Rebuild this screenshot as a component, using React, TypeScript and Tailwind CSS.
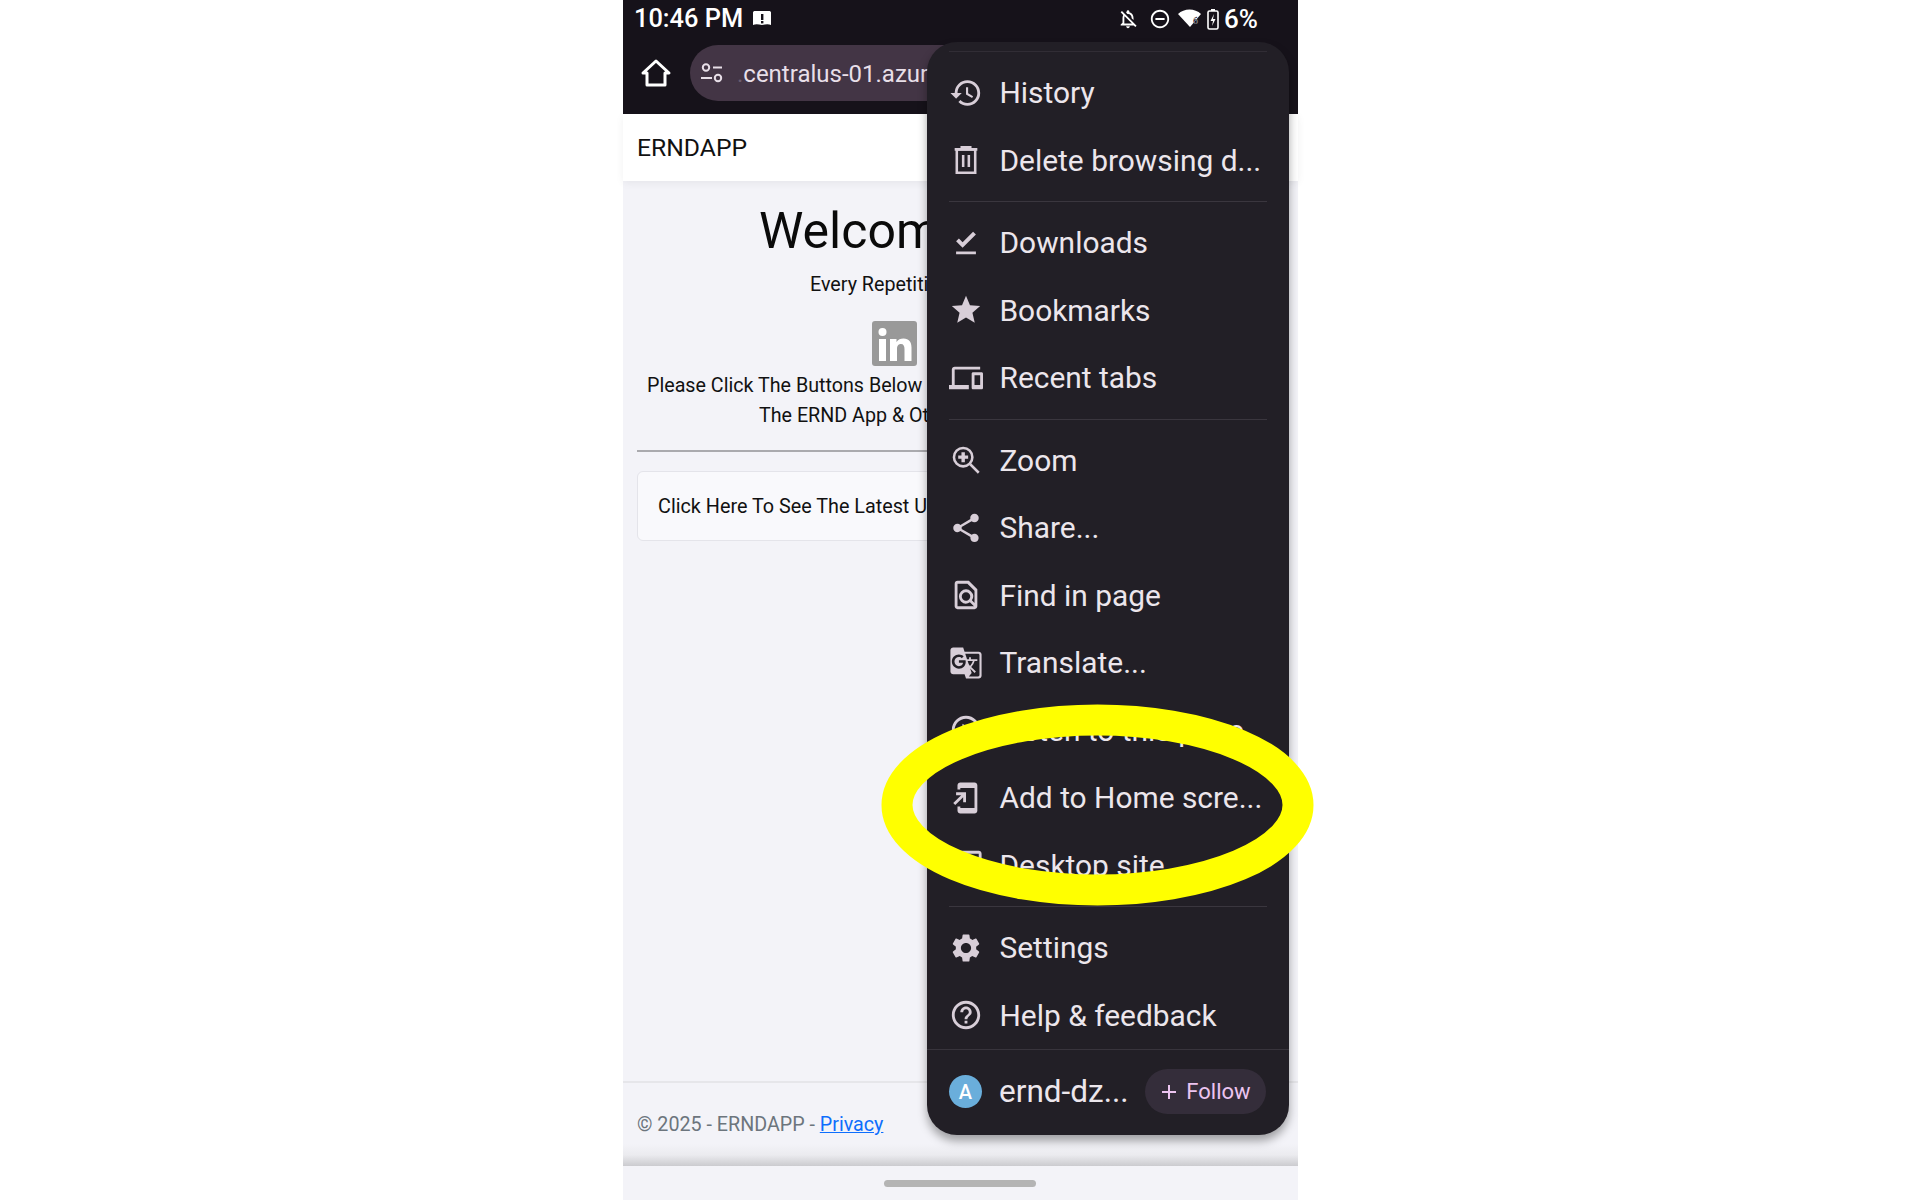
import type { ReactNode } from "react";
import {
  MdHistory,
  MdFileDownloadDone,
  MdStar,
  MdOutlineDevices,
  MdShare,
  MdOutlineFindInPage,
  MdGTranslate,
  MdOutlinePlayCircle,
  MdOutlineAddToHomeScreen,
  MdOutlineDesktopWindows,
  MdSettings,
  MdHelpOutline,
  MdOutlineNotificationsOff,
  MdOutlineDoNotDisturbOn,
  MdAdd,
} from "react-icons/md";

type Item = { icon: ReactNode; label: string };

const ic = "text-[#d8ced8] w-[34px] h-[34px]";

const TrashIcon = () => (
  <svg className={ic} viewBox="0 0 24 24" fill="none" stroke="currentColor" strokeWidth="1.8">
    <path d="M4 4.500h16M9 4.500V3h6v1.500" />
    <path d="M5.500 4.500h13V21h-13z" />
    <path d="M10 8.500v8.500M14 8.500v8.500" />
  </svg>
);

const ZoomIcon = () => (
  <svg className={ic} viewBox="0 0 24 24" fill="none" stroke="currentColor" strokeWidth="1.8">
    <circle cx="10" cy="10" r="6.500" />
    <path d="M15 15l6 6" />
    <path d="M10 6.500v7M6.500 10h7" strokeWidth="2.400" />
  </svg>
);

const groups: Item[][] = [
  [
    { icon: <MdHistory className={ic} />, label: "History" },
    { icon: <TrashIcon />, label: "Delete browsing d..." },
  ],
  [
    { icon: <MdFileDownloadDone className={ic} />, label: "Downloads" },
    { icon: <MdStar className={ic} />, label: "Bookmarks" },
    { icon: <MdOutlineDevices className={ic} />, label: "Recent tabs" },
  ],
  [
    { icon: <ZoomIcon />, label: "Zoom" },
    { icon: <MdShare className={ic} />, label: "Share..." },
    { icon: <MdOutlineFindInPage className={ic} />, label: "Find in page" },
    { icon: <MdGTranslate className={ic} />, label: "Translate..." },
    { icon: <MdOutlinePlayCircle className={ic} />, label: "Listen to this page" },
    { icon: <MdOutlineAddToHomeScreen className={ic} />, label: "Add to Home scre..." },
    { icon: <MdOutlineDesktopWindows className={ic} />, label: "Desktop site" },
  ],
  [
    { icon: <MdSettings className={ic} />, label: "Settings" },
    { icon: <MdHelpOutline className={ic} />, label: "Help & feedback" },
  ],
];

const Row = ({ icon, label }: Item) => (
  <div className="flex h-[67.5px] items-center">
    <div className="flex w-[72.500px] shrink-0 pl-[22px]">{icon}</div>
    <span className="whitespace-nowrap pt-[1px] text-[29.900px] leading-none text-[#ece6ec]">{label}</span>
  </div>
);

const Menu = () => (
  <div className="absolute left-[304px] top-[42px] h-[1093px] w-[362px] rounded-[30px] bg-[#221f26] shadow-[0_6px_10px_rgba(0,0,0,0.35)]">
    <div className="mx-[22px] mt-[9px] mb-[7px] h-[1px] bg-[#312d35]" />
    {groups.map((group, i) => (
      <div key={i}>
        {i > 0 && <div className="mx-[22px] my-[7px] h-[1px] bg-[#3a363e]" />}
        {group.map((item) => (
          <Row key={item.label} {...item} />
        ))}
      </div>
    ))}
    <div className="flex h-[84px] items-center border-t border-[#38343c] pl-[22px] pr-[23px]">
      <div className="flex h-[33px] w-[33px] items-center justify-center rounded-full bg-[#6aaedb] text-[20px] font-medium text-white">
        A
      </div>
      <span className="ml-[17px] text-[31.500px] leading-none text-[#ece6ec]">ernd-dz...</span>
      <div className="ml-auto flex h-[45px] w-[121px] items-center justify-center gap-[5px] rounded-full bg-[#342d3a] pr-[3px] text-[22px] text-[#ecc4f0]">
        <MdAdd className="h-[24px] w-[24px]" />
        Follow
      </div>
    </div>
  </div>
);

// the hand drawn yellow ring from the screenshot
const Highlight = () => (
  <svg className="absolute left-[258px] top-[704px]" width="434" height="202" viewBox="0 0 434 202">
    <ellipse cx="216.5" cy="101" rx="200.5" ry="85" fill="none" stroke="#ffff00" strokeWidth="31" />
  </svg>
);

const StatusBar = () => (
  <div className="flex h-[36px] items-center pl-[11px] pt-[2px] text-white">
    <span className="text-[25.400px] font-medium leading-none">10:46 PM</span>
    <svg className="ml-[9px]" width="20" height="18" viewBox="0 0 20 18">
      <path d="M1 2.500c0-1 1-1.500 2-1.500h14c1 0 2 .5 2 1.500V15c-2-1-5-1-9 0-4-1-7-1-9 0z" fill="#fff" />
      <rect x="9" y="4" width="2.400" height="6" fill="#16121a" />
      <rect x="9" y="11" width="2.400" height="2.400" fill="#16121a" />
    </svg>
    <div className="ml-auto flex items-center pr-[40px]">
      <MdOutlineNotificationsOff className="h-[22px] w-[22px]" />
      <MdOutlineDoNotDisturbOn className="ml-[10px] h-[22px] w-[22px]" />
      <svg className="ml-[7px]" width="24" height="20" viewBox="0 0 24 20">
        <path d="M0 5C6-1 17-1 23 5l-11 13z" fill="#fff" />
        <text x="15" y="15" fontSize="9" fill="#fff" fontFamily="Roboto" stroke="#16121a" strokeWidth="0.4">6</text>
      </svg>
      <svg className="ml-[5px]" width="12" height="22" viewBox="0 0 12 22">
        <rect x="1" y="3" width="10" height="18" rx="1.500" fill="none" stroke="#fff" strokeWidth="1.600" />
        <rect x="4" y="1" width="4" height="2" fill="#fff" />
        <path d="M7 6 3.500 13H6l-1 5 3.500-7H6z" fill="#fff" />
      </svg>
      <span className="ml-[5px] text-[26px] font-medium leading-none">6%</span>
    </div>
  </div>
);

const HomeIcon = () => (
  <svg width="34" height="34" viewBox="0 0 34 34" fill="none" stroke="#fff" strokeWidth="3" strokeLinejoin="round">
    <path d="M4 17 17 5l13 12h-4v12H8V17z" />
  </svg>
);

const TuneIcon = () => (
  <svg width="24" height="20" viewBox="0 0 24 20" fill="none" stroke="#e8dfe8" strokeWidth="2">
    <circle cx="6" cy="4.500" r="3.200" />
    <path d="M13 4.500h9M1 15h11" />
    <circle cx="18" cy="15" r="3.200" />
  </svg>
);

const LinkedIn = () => (
  <svg width="45" height="45" viewBox="0 0 45 45">
    <rect width="45" height="45" rx="3" fill="#999999" />
    <circle cx="10.500" cy="11" r="4" fill="#fff" />
    <rect x="7" y="18" width="7" height="22" fill="#fff" />
    <path d="M18 18h6.500v3c1.500-2.400 4-3.500 7-3.500 5.500 0 8 3.500 8 9V40h-7V28c0-3-1-5-3.500-5-3 0-4 2.200-4 5v12h-7z" fill="#fff" />
  </svg>
);

export default function App() {
  return (
    <div className="h-[1200px] overflow-hidden bg-white" style={{ fontFamily: "Roboto, sans-serif" }}>
      <div className="relative ml-[623px] flex h-[1200px] w-[675px] flex-col bg-[#f3f3f8]">
        <div className="h-[114px] shrink-0 bg-[#16121a]">
          <StatusBar />
          <div className="mt-[9px] flex items-center pl-[16px]">
            <HomeIcon />
            <div className="ml-[17px] flex h-[56px] w-[300px] items-center rounded-l-full bg-[#433545] pl-[10px]">
              <TuneIcon />
              <span className="ml-[13px] pt-[1px] text-[24px] text-[#e8dfe8]">
                <span className="text-[#6a5c6e]">.</span>centralus-01.azur
              </span>
            </div>
          </div>
        </div>

        <div className="flex h-[67px] shrink-0 items-center bg-white pl-[14px] pt-[1px] text-[24.700px] text-[#111] shadow-[0_2px_8px_rgba(0,0,0,0.06)]">
          ERNDAPP
        </div>

        <main className="flex-1 px-[14px]">
          <h1 className="mt-[21px] ml-[122px] whitespace-nowrap text-[50px] font-normal leading-[58px] text-[#0a0a0a]">Welcom</h1>
          <p className="mt-[11px] ml-[173px] text-[19.700px] leading-[28px] text-[#111]">Every Repetiti</p>
          <div className="mt-[22px] ml-[235px]">
            <LinkedIn />
          </div>
          <p className="mt-[5px] ml-[10px] whitespace-nowrap text-[19.700px] leading-[30px] text-[#111]">Please Click The Buttons Below</p>
          <p className="ml-[122px] whitespace-nowrap text-[19.700px] leading-[30px] text-[#111]">The ERND App &amp; Ot</p>
          <div className="mt-[19px] h-[2px] bg-[#aaaaae]" />
          <div className="mt-[19px] flex h-[70px] items-center rounded-[6px] border border-[#e4e4ea] bg-[#f9f9fc] pl-[20px] pt-[2px] text-[19.800px] text-[#111]">
            Click Here To See The Latest U
          </div>
        </main>

        <footer className="flex h-[85px] shrink-0 flex-col border-t-2 border-[#e6e6ea]">
          <div className="pl-[14px] pt-[28px] text-[19.700px] leading-[28px] text-[#6c757d]">
            © 2025 - ERNDAPP - <a className="text-[#0d6efd] underline">Privacy</a>
          </div>
          <div className="mt-auto h-[22px] bg-gradient-to-b from-transparent via-[#ebebef] to-[#cbcbcf]" />
        </footer>

        <div className="flex h-[34px] shrink-0 items-center justify-center bg-[#f3f3f8] pr-[2px]">
          <div className="h-[7px] w-[152px] rounded-full bg-[#b4b4b4]" />
        </div>

        <Menu />
        <Highlight />
      </div>
    </div>
  );
}
